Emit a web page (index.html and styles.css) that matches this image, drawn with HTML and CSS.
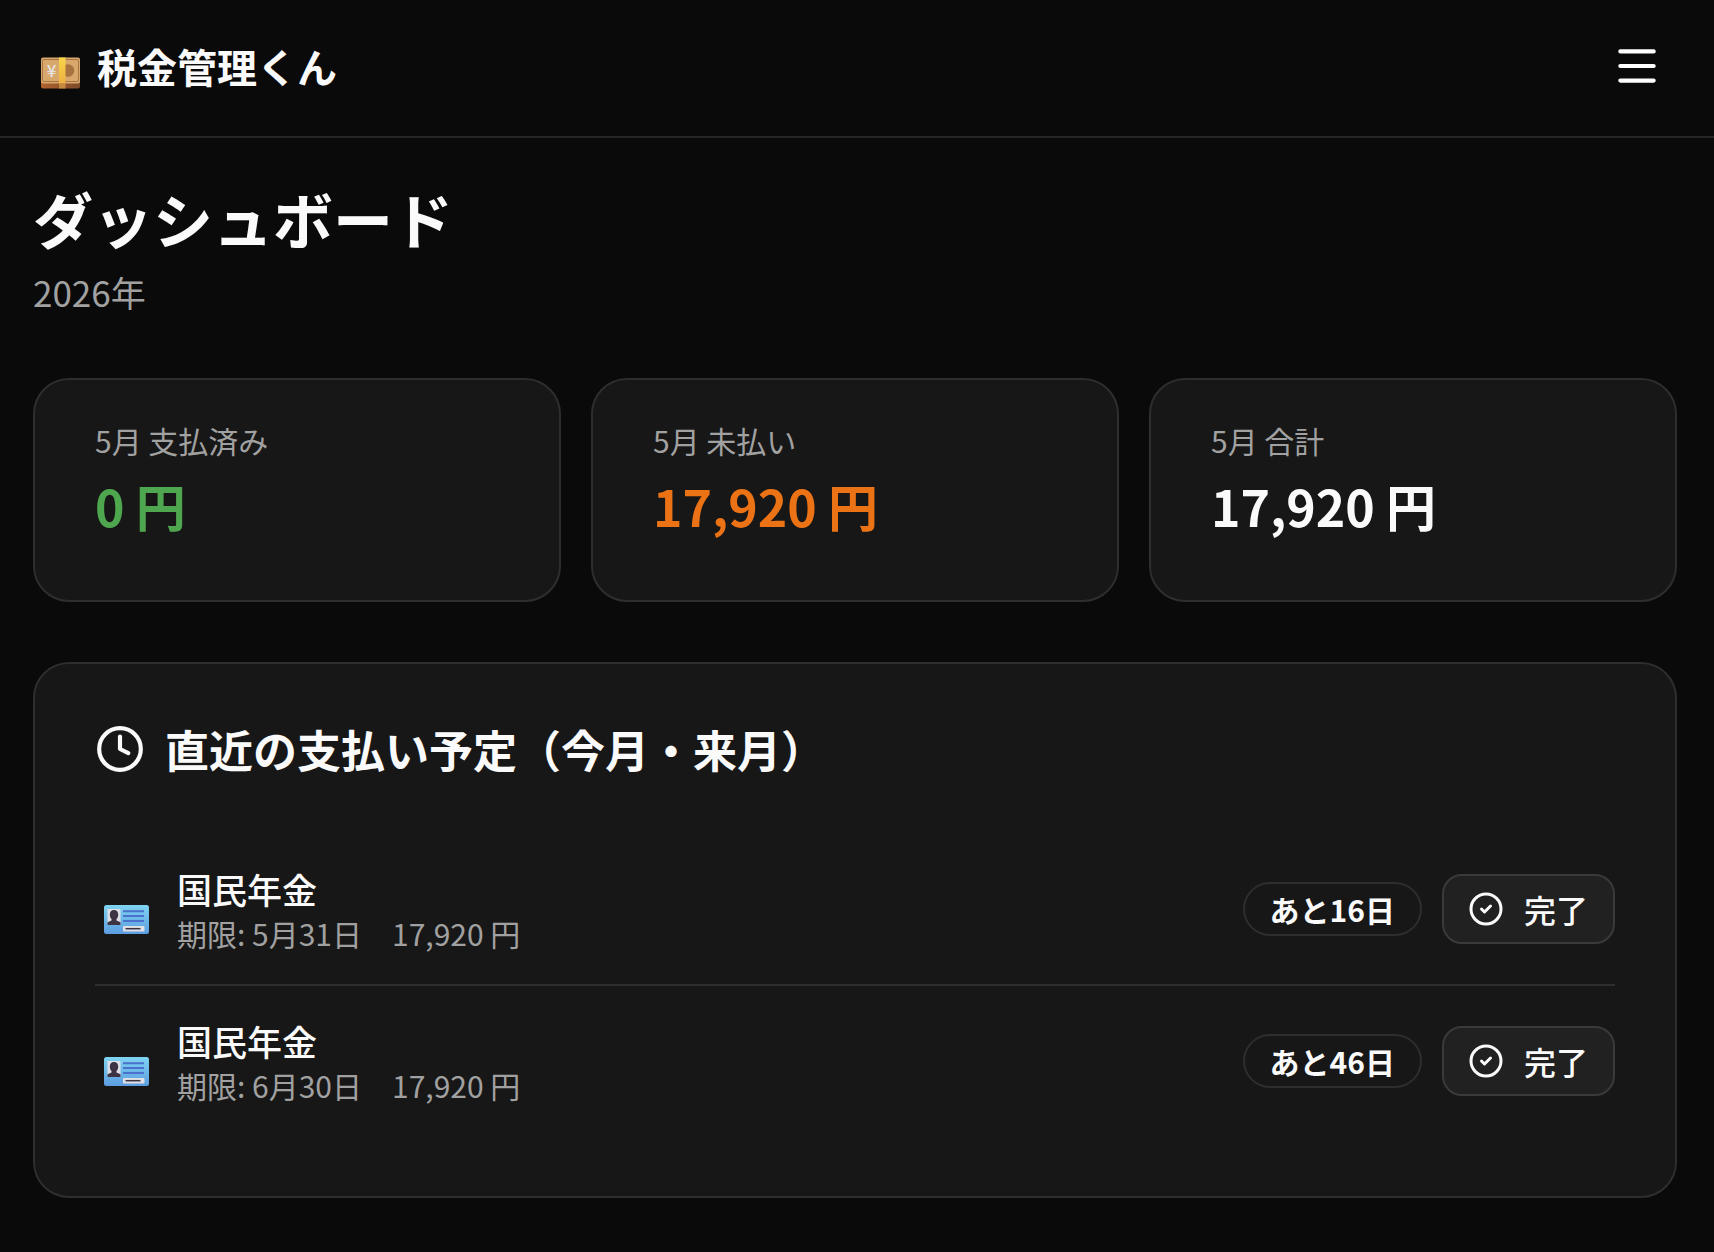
FILE: index.html
```html
<!DOCTYPE html>
<html lang="ja">
<head>
    <meta charset="UTF-8">
    <meta name="viewport" content="width=device-width, initial-scale=1.0">
    <title>税金管理くん</title>
    <link rel="stylesheet" href="styles.css">
</head>
<body>
    <!-- shared artwork -->
    <svg class="defs" width="0" height="0" aria-hidden="true">
        <defs>
            <linearGradient id="cardBlue" x1="0" y1="0" x2="0" y2="1">
                <stop offset="0" stop-color="#7fd4f2"/>
                <stop offset="1" stop-color="#5c9ce0"/>
            </linearGradient>
            <linearGradient id="billSide" x1="0" y1="0" x2="1" y2="0">
                <stop offset="0" stop-color="#b0622f"/>
                <stop offset="1" stop-color="#7d4a2a"/>
            </linearGradient>
            <linearGradient id="strap" x1="0" y1="0" x2="0" y2="1">
                <stop offset="0" stop-color="#f8d648"/>
                <stop offset="1" stop-color="#efb044"/>
            </linearGradient>
        </defs>
        <symbol id="id-card" viewBox="0 0 45 29">
            <rect width="45" height="29" rx="2.5" fill="url(#cardBlue)"/>
            <rect x="3.5" y="4" width="13" height="16" fill="#dfe0e6"/>
            <path d="M10 5c2.800 0 4.200 1.800 4.200 4.500 0 2-.7 3.600-1.700 4.500v1.500l4 1.800V20h-13v-2.700l4-1.800V14c-1-.9-1.700-2.500-1.700-4.500C5.800 6.800 7.200 5 10 5z" fill="#3d3345"/>
            <path d="M19 6.300h21M19 11h21M19 16h21" stroke="#4a72cc" stroke-width="2"/>
            <rect x="19" y="21" width="21.500" height="5.500" rx="1" fill="#dfe0e6"/>
            <path d="M21.500 23.700h15" stroke="#3d3345" stroke-width="1.500"/>
        </symbol>
    </svg>

    <header class="header">
        <a class="logo" href="#">
            <svg class="logo-icon" viewBox="0 0 40 32" aria-hidden="true">
                <rect y="3" width="39" height="28.500" rx="2" fill="url(#billSide)"/>
                <rect y="0.500" width="39" height="26" rx="2" fill="#d8a76c"/>
                <rect x="1.500" y="2.500" width="36" height="22" rx="1.500" fill="none" stroke="#a87544"/>
                <circle cx="27" cy="13.500" r="6.300" fill="#a97341"/>
                <rect x="18" y="0.500" width="6.500" height="26" fill="url(#strap)"/>
                <rect x="18" y="26.500" width="6.500" height="5" fill="#c5893f"/>
                <text class="yen" x="10.500" y="19.500">¥</text>
            </svg>
            <span>税金管理くん</span>
        </a>
        <button class="menu-button" type="button" aria-label="メニュー">
            <svg class="icon" viewBox="0 0 24 24"><path d="M4 5h16M4 12h16M4 19h16"/></svg>
        </button>
    </header>

    <main class="container">
        <h1>ダッシュボード</h1>
        <p class="year">2026年</p>

        <section class="stats">
            <div class="card stat">
                <p class="stat-label">5月 支払済み</p>
                <p class="stat-value paid">0 円</p>
            </div>
            <div class="card stat">
                <p class="stat-label">5月 未払い</p>
                <p class="stat-value unpaid">17,920 円</p>
            </div>
            <div class="card stat">
                <p class="stat-label">5月 合計</p>
                <p class="stat-value">17,920 円</p>
            </div>
        </section>

        <section class="card upcoming">
            <h2>
                <svg class="icon" viewBox="0 0 24 24"><circle cx="12" cy="12" r="10"/><path d="M12 6v6l4 2"/></svg>
                直近の支払い予定（今月・来月）
            </h2>
            <ul class="payments">
                <li class="payment">
                    <span class="payment-icon"><svg aria-hidden="true"><use href="#id-card"/></svg></span>
                    <div class="payment-info">
                        <p class="payment-name">国民年金</p>
                        <p class="payment-detail"><span>期限: 5月31日</span><span>17,920 円</span></p>
                    </div>
                    <span class="badge">あと16日</span>
                    <button class="done-button" type="button">
                        <svg class="icon" viewBox="0 0 24 24"><circle cx="12" cy="12" r="10"/><path d="m9 12 2 2 4-4"/></svg>
                        完了
                    </button>
                </li>
                <li class="payment">
                    <span class="payment-icon"><svg aria-hidden="true"><use href="#id-card"/></svg></span>
                    <div class="payment-info">
                        <p class="payment-name">国民年金</p>
                        <p class="payment-detail"><span>期限: 6月30日</span><span>17,920 円</span></p>
                    </div>
                    <span class="badge">あと46日</span>
                    <button class="done-button" type="button">
                        <svg class="icon" viewBox="0 0 24 24"><circle cx="12" cy="12" r="10"/><path d="m9 12 2 2 4-4"/></svg>
                        完了
                    </button>
                </li>
            </ul>
        </section>
    </main>
</body>
</html>
```

FILE: styles.css
```css
* {
    box-sizing: border-box;
    margin: 0;
    padding: 0;
}
body {
    font-family: "Noto Sans CJK JP", sans-serif;
    background-color: #0a0a0a;
    color: #fafafa;
}
.defs {
    display: block;
}
.icon {
    width: 50px;
    height: 50px;
    flex-shrink: 0;
    fill: none;
    stroke: currentColor;
    stroke-width: 2;
    stroke-linecap: round;
    stroke-linejoin: round;
}
.header {
    display: flex;
    align-items: center;
    justify-content: space-between;
    height: 138px;
    padding: 0 37px 4px 41px;
    border-bottom: 2px solid #262626;
}
.logo {
    display: flex;
    align-items: center;
    gap: 16px;
    color: inherit;
    font-size: 40px;
    font-weight: 700;
    line-height: 60px;
    text-decoration: none;
}
.logo-icon {
    width: 40px;
    height: 32px;
    margin-top: 14px;
}
.yen {
    font-family: "Noto Sans CJK JP", sans-serif;
    font-size: 17px;
    font-weight: 500;
    text-anchor: middle;
    fill: #e6e2e2;
}
.menu-button {
    display: flex;
    padding: 15px;
    background: none;
    border: none;
    color: #fff;
    cursor: pointer;
}
.container {
    padding: 44px 37px 48px 33px;
}
h1 {
    font-size: 60px;
    font-weight: 700;
    line-height: 72px;
}
.year {
    margin-top: 12px;
    font-size: 35px;
    line-height: 52px;
    color: #a1a1a1;
}
.card {
    background-color: #171717;
    border: 2px solid #2e2e2e;
    border-radius: 36px;
}
.stats {
    display: grid;
    grid-template-columns: repeat(3, 1fr);
    gap: 30px;
    margin: 60px 0;
}
.stat {
    padding: 38px 60px 62px;
}
.stat-label {
    font-size: 30px;
    line-height: 45px;
    color: #a1a1a1;
}
.stat-value {
    margin-top: 10px;
    font-size: 50px;
    font-weight: 700;
    line-height: 65px;
}
.paid {
    color: #4ea64e;
}
.unpaid {
    color: #eb7215;
}
.upcoming {
    padding: 60px;
}
h2 {
    display: flex;
    align-items: center;
    gap: 20px;
    font-size: 44px;
    font-weight: 700;
    line-height: 50px;
}
.payments {
    margin-top: 60px;
    list-style: none;
}
.payment {
    display: flex;
    align-items: center;
    gap: 20px;
    padding: 28px 0;
}
.payment + .payment {
    border-top: 2px solid #2e2e2e;
}
.payment-icon {
    display: flex;
    justify-content: center;
    width: 62px;
    padding-top: 20px;
}
.payment-icon svg {
    width: 45px;
    height: 29px;
}
.payment-info {
    flex: 1;
    padding-top: 4px;
}
.payment-name {
    font-size: 35px;
    font-weight: 500;
    line-height: 45px;
}
.payment-detail {
    display: flex;
    gap: 30px;
    font-size: 30px;
    line-height: 45px;
    color: #a1a1a1;
}
.badge {
    padding: 0 25px;
    border: 2px solid #2e2e2e;
    border-radius: 27px;
    font-size: 30px;
    font-weight: 700;
    line-height: 50px;
}
.done-button {
    display: flex;
    align-items: center;
    gap: 20px;
    height: 70px;
    padding: 0 25px 0 24px;
    background-color: #212121;
    border: 2px solid #3a3a3a;
    border-radius: 20px;
    color: inherit;
    font-family: inherit;
    font-size: 32px;
    font-weight: 500;
    cursor: pointer;
}
.done-button .icon {
    width: 36px;
    height: 36px;
}
```
